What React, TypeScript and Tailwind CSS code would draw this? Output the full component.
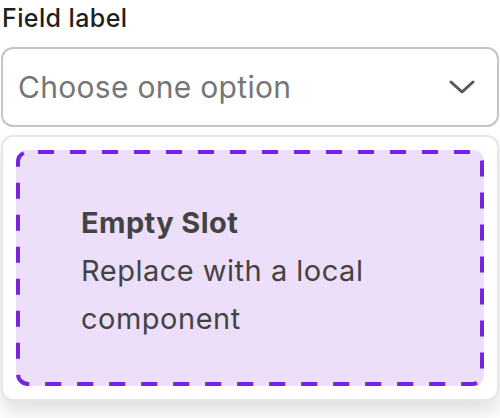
export default function App() {
  return (
    <div className="w-[500px] h-[418px] bg-white px-[1px] font-['Inter','Noto_Sans',sans-serif]">
      <p className="pt-[3px] pl-[1px] text-[25px] leading-[31px] font-medium text-[#1f1f1f] tracking-[0.4px]">Field label</p>

      <div className="mt-[13px] h-[80px] flex items-center justify-between border-2 border-[#c4c4c4] rounded-[12px] pl-[15px] pr-[22px]">
        <span className="text-[30px] text-[#767676] tracking-[0.3px]">Choose one option</span>
        <svg width="26" height="14" viewBox="0 0 26 14" fill="none">
          <polyline points="2,2 13,12 24,2" stroke="#575757" strokeWidth="3" strokeLinecap="round" strokeLinejoin="round" />
        </svg>
      </div>

      <div className="mt-[8px] rounded-[12px] border-2 border-[#e6e6e6] bg-white p-[13px] shadow-[0_12px_20px_rgba(0,0,0,0.12)]">
        <div className="relative h-[236px] flex flex-col justify-center rounded-[10px] bg-[#eddffa] pl-[65px] pr-4 pt-[5px]">
          <svg className="absolute inset-0" width="468" height="236" viewBox="0 0 468 236" fill="none">
            <rect x="2" y="2" width="464" height="232" rx="10" stroke="#7424e0" strokeWidth="4" strokeDasharray="16 16" strokeDashoffset="-10" />
          </svg>
          <p className="text-[29px] leading-[48px] font-bold text-[#434343] tracking-[0.4px]">Empty Slot</p>
          <p className="text-[29px] leading-[48px] text-[#434343] tracking-[0.5px]">Replace with a local<br />component</p>
        </div>
      </div>
    </div>
  );
}
